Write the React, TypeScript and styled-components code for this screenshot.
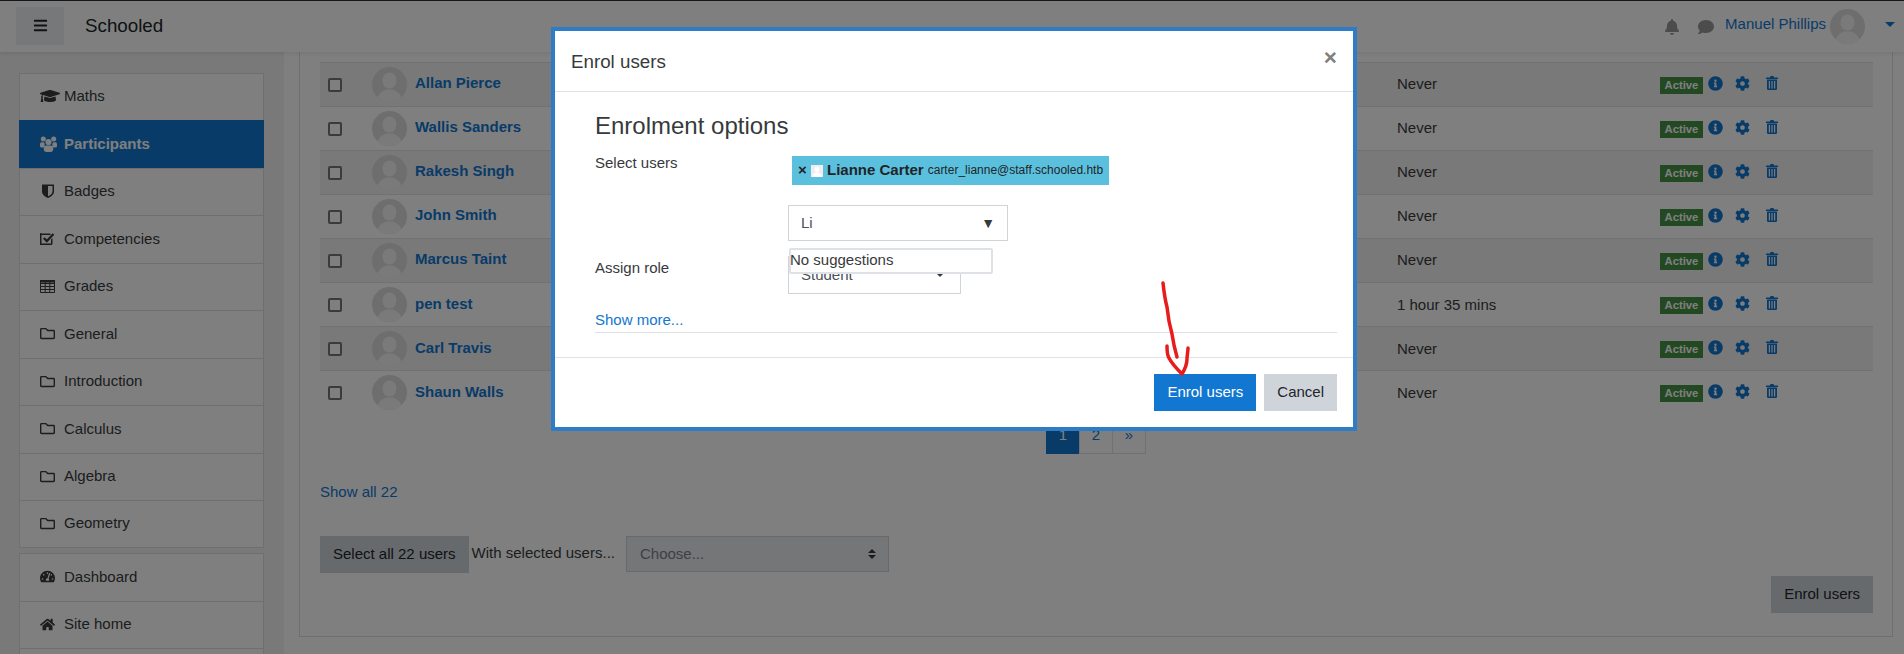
import React from 'react';
import styled, { createGlobalStyle } from 'styled-components';
import {
  FaBars,
  FaBell,
  FaCog,
  FaComment,
  FaGraduationCap,
  FaHome,
  FaInfoCircle,
  FaRegFolder,
  FaTachometerAlt,
} from 'react-icons/fa';

const GlobalStyle = createGlobalStyle`
  html, body {
    margin: 0;
    padding: 0;
    height: 654px;
    overflow: hidden;
    background: #fff;
    font-family: "Liberation Sans", Arial, sans-serif;
    font-size: 15px;
    line-height: 22.5px;
    color: #373a3c;
  }
  * { box-sizing: border-box; }
`;

const Page = styled.div`
  width: 1904px;
  height: 654px;
  overflow: hidden;
  display: flex;
  flex-direction: column;
  border-top: 1px solid #2a2d33;
`;

const Navbar = styled.header`
  height: 51px;
  flex: none;
  display: flex;
  align-items: center;
  padding-left: 16px;
  background: #fff;
  box-shadow: 0 2px 4px rgba(0, 0, 0, 0.08);
  position: relative;
  z-index: 1;
`;

const MenuButton = styled.div`
  width: 48px;
  height: 38px;
  margin-top: -2px;
  display: flex;
  align-items: center;
  justify-content: center;
  background: #edf0f3;
  color: #212529;
  font-size: 15px;
`;

const Brand = styled.div`
  margin-left: 21px;
  font-size: 18.75px;
  color: #212529;
`;

const NavRight = styled.div`
  margin-left: auto;
  display: flex;
  align-items: center;
  height: 100%;
`;

const NavIcon = styled.span<{ $w: number }>`
  width: ${(p) => p.$w}px;
  display: flex;
  color: #999;
  font-size: 16px;
`;

const UserName = styled.a`
  color: #1177d1;
  font-size: 15px;
  margin-right: 4px;
  margin-top: -4px;
`;

const UserAvatar = styled.svg`
  width: 35px;
  height: 35px;
  margin-top: -1px;
`;

const Caret = styled.span`
  margin: -5px 9px 0 20px;
  width: 0;
  height: 0;
  border-top: 5px solid #1177d1;
  border-left: 5px solid transparent;
  border-right: 5px solid transparent;
`;

const Body = styled.div`
  flex: 1;
  display: flex;
  min-height: 0;
`;

const Sidebar = styled.aside`
  width: 284px;
  flex: none;
  padding: 20.5px 20px 0 19px;
  background: #f2f2f2;
  overflow: hidden;
`;

const NavList = styled.ul`
  list-style: none;
  margin: 0 0 5.5px;
  padding: 0;
  background: #fff;
`;

const NavItem = styled.li<{ $active?: boolean }>`
  height: 47.5px;
  display: flex;
  align-items: center;
  padding-left: ${(p) => (p.$active ? '21px' : '20px')};
  padding-bottom: ${(p) => (p.$active ? '0' : '1px')};
  border: 1px solid rgba(0, 0, 0, 0.125);
  border-width: ${(p) => (p.$active ? '0' : '1px 1px 0')};
  background: ${(p) => (p.$active ? '#1177d1' : 'transparent')};
  color: ${(p) => (p.$active ? '#fff' : '#373a3c')};
  font-weight: ${(p) => (p.$active ? 700 : 400)};
  &:last-child {
    border-bottom-width: 1px;
  }
`;

const NavGlyph = styled.span`
  width: 24px;
  flex: none;
  display: flex;
  font-size: 15px;
`;

const GraduationGlyph = styled(NavGlyph)`
  font-size: 20px;
`;

const DrawnIcon = styled.svg<{ $w: number; $h: number }>`
  width: ${(p) => p.$w}px;
  height: ${(p) => p.$h}px;
  fill: currentColor;
  display: block;
`;

const Content = styled.main`
  flex: 1;
  padding: 0 11px 17px 15px;
  min-width: 0;
`;

const Card = styled.section`
  height: 585px;
  padding: 10px 19px 0 20px;
  border: 1px solid rgba(0, 0, 0, 0.125);
  border-top: none;
  background: #fff;
  display: flex;
  flex-direction: column;
`;

const Table = styled.div`
  flex: none;
`;

const Row = styled.div<{ $striped: boolean }>`
  height: 44.05px;
  display: grid;
  grid-template-columns: 44px 43px 982px 263px 1fr;
  align-items: center;
  padding-left: 8px;
  border-top: 1px solid #dee2e6;
  background: ${(p) => (p.$striped ? 'rgba(0, 0, 0, 0.05)' : 'transparent')};
`;

const Check = styled.span`
  width: 14px;
  height: 14px;
  border: 2px solid #767676;
  border-radius: 2px;
  background: #fff;
`;

const Avatar = styled.svg`
  width: 35px;
  height: 35px;
  display: block;
`;

const Name = styled.a`
  color: #1177d1;
  font-weight: 700;
  margin-top: -2px;
`;

const LastAccess = styled.span`
  color: #373a3c;
`;

const Actions = styled.div`
  display: flex;
  align-items: flex-start;
  color: #1177d1;
  margin-top: 1px;
`;

const Badge = styled.span`
  width: 43px;
  height: 17px;
  margin-top: 1px;
  background: #449244;
  color: #fff;
  font-size: 11.25px;
  font-weight: 700;
  line-height: 17px;
  text-align: center;
`;

const ActionIcon = styled.span<{ $w: number }>`
  width: ${(p) => p.$w}px;
  display: flex;
  font-size: 15px;
  justify-content: flex-end;
`;

const Pager = styled.div`
  display: flex;
  margin: 2px 0 0 726px;
  height: 38px;
`;

const PageLink = styled.span<{ $current?: boolean }>`
  width: 34px;
  height: 38px;
  display: flex;
  align-items: center;
  justify-content: center;
  background: ${(p) => (p.$current ? '#1177d1' : 'transparent')};
  color: ${(p) => (p.$current ? '#fff' : '#1177d1')};
  border: 1px solid ${(p) => (p.$current ? '#1177d1' : '#dee2e6')};
  & + & {
    margin-left: -1px;
  }
`;

const ShowAll = styled.a`
  display: block;
  margin-top: 27px;
  color: #1177d1;
`;

const BulkRow = styled.div`
  display: flex;
  margin-top: 32px;
`;

const GreyButton = styled.div`
  height: 37px;
  padding: 0 13px;
  display: flex;
  align-items: center;
  background: #ced4da;
  color: #212529;
`;

const BulkLabel = styled.span`
  margin: 6px 11px 0 3px;
  color: #373a3c;
`;

const BulkSelect = styled.div`
  width: 263px;
  height: 36px;
  padding: 0 13px;
  display: flex;
  align-items: center;
  justify-content: space-between;
  border: 1px solid #ced4da;
  background: #e9ecef;
  color: #7a828a;
`;

const Updown = styled.svg`
  width: 8px;
  height: 10px;
  margin-right: -1px;
`;

const BottomRow = styled.div`
  display: flex;
  justify-content: flex-end;
  margin-top: 3px;
`;

const Backdrop = styled.div`
  position: fixed;
  inset: 0;
  background: rgba(0, 0, 0, 0.5);
  z-index: 10;
`;

const Modal = styled.div`
  position: fixed;
  left: 551px;
  top: 27px;
  width: 806px;
  height: 404px;
  border: 4px solid #2e7cc6;
  background: #fff;
  z-index: 11;
  display: flex;
  flex-direction: column;
`;

const ModalHeader = styled.div`
  height: 61px;
  flex: none;
  display: flex;
  align-items: center;
  justify-content: space-between;
  padding: 0 16px 0 16px;
  border-bottom: 1px solid #dee2e6;
`;

const ModalTitle = styled.h5`
  margin: 3px 0 0;
  font-size: 18.75px;
  font-weight: 400;
  color: #373a3c;
`;

const CloseMark = styled.span`
  font-size: 22.5px;
  font-weight: 700;
  color: #808080;
  margin-top: -6px;
`;

const ModalBody = styled.div`
  flex: 1;
  padding: 20px 16px 0 40px;
  position: relative;
`;

const Heading = styled.h3`
  margin: 0 0 12px;
  font-size: 24px;
  line-height: 28px;
  font-weight: 400;
  color: #373a3c;
`;

const FormRow = styled.div`
  display: grid;
  grid-template-columns: 193px 1fr;
  & + & {
    margin-top: 15px;
  }
`;

const FormLabel = styled.label`
  color: #373a3c;
`;

const RoleLabel = styled(FormLabel)`
  padding-top: 1px;
`;

const Chip = styled.div`
  width: 317px;
  height: 29px;
  margin: 4px 0 0 4px;
  display: flex;
  align-items: center;
  padding-left: 6px;
  background: #5bc0de;
  color: #212529;
`;

const ChipClose = styled.span`
  font-size: 15px;
  font-weight: 700;
  width: 13px;
`;

const ChipAvatar = styled.svg`
  width: 12px;
  height: 12px;
  margin-right: 4px;
`;

const ChipName = styled.strong`
  font-size: 15px;
  margin-right: 4px;
`;

const ChipMail = styled.span`
  font-size: 12px;
`;

const SearchBox = styled.div`
  width: 220px;
  height: 36px;
  margin-top: 20px;
  padding: 0 12px;
  display: flex;
  align-items: center;
  justify-content: space-between;
  border: 1px solid #ced4da;
  color: #495057;
`;

const SearchArrow = styled.span`
  font-size: 14px;
  color: #373a3c;
`;

const RoleSelect = styled.div`
  width: 173px;
  height: 38px;
  padding: 0 12px;
  display: flex;
  align-items: center;
  justify-content: space-between;
  border: 1px solid #ced4da;
  color: #495057;
`;

const RoleCaret = styled.span`
  width: 0;
  height: 0;
  margin-right: 4px;
  border-top: 4px solid #373a3c;
  border-left: 4px solid transparent;
  border-right: 4px solid transparent;
`;

const Suggestions = styled.div`
  position: absolute;
  left: 234px;
  top: 156px;
  width: 204px;
  height: 26px;
  border: 2px solid #dee2e6;
  border-radius: 2px;
  background: #fff;
  color: #373a3c;
  line-height: 20px;
  text-indent: -1px;
`;

const ShowMore = styled.a`
  display: block;
  margin-top: 15px;
  border-bottom: 1px solid #dee2e6;
  color: #1177d1;
`;

const ModalFooter = styled.div`
  height: 70px;
  flex: none;
  display: flex;
  justify-content: flex-end;
  align-items: flex-start;
  gap: 8px;
  padding: 16px 16px 0 0;
  border-top: 1px solid #dee2e6;
`;

const FooterButton = styled.div<{ $primary?: boolean }>`
  height: 37px;
  padding: 0 13px;
  display: flex;
  align-items: center;
  background: ${(p) => (p.$primary ? '#1177d1' : '#ced4da')};
  color: ${(p) => (p.$primary ? '#fff' : '#212529')};
`;

const Arrow = styled.svg`
  position: fixed;
  left: 1155px;
  top: 275px;
  width: 45px;
  height: 105px;
  z-index: 12;
`;

const Silhouette = ({ as: Comp = Avatar }: { as?: typeof Avatar }) => (
  <Comp viewBox="0 0 35 35">
    <defs>
      <clipPath id="round">
        <circle cx="17.5" cy="17.5" r="17.5" />
      </clipPath>
    </defs>
    <g clipPath="url(#round)">
      <rect width="35" height="35" fill="#dcdcdc" />
      <ellipse cx="17.5" cy="13.5" rx="7" ry="8" fill="#f4f4f4" />
      <path d="M5 35c0-8 5-11 9-12.500h7c4 1.500 9 4.500 9 12.500z" fill="#f4f4f4" />
    </g>
  </Comp>
);

const SmallSilhouette = () => (
  <ChipAvatar viewBox="0 0 12 12">
    <rect width="12" height="12" fill="#eeeeee" />
    <ellipse cx="6" cy="4.500" rx="2.400" ry="2.800" fill="#ffffff" />
    <path d="M1.500 12c0-3 2-4 3.500-4.500h2c1.500.5 3.500 1.500 3.500 4.500z" fill="#ffffff" />
  </ChipAvatar>
);

const UsersIcon = () => (
  <DrawnIcon $w={17} $h={16} viewBox="0 0 17 16">
    <circle cx="3.300" cy="3" r="2.500" />
    <circle cx="13.700" cy="3" r="2.500" />
    <circle cx="8.500" cy="6" r="3.100" />
    <rect x="0" y="6.200" width="4.600" height="5.300" rx="1.600" />
    <rect x="12.400" y="6.200" width="4.600" height="5.300" rx="1.600" />
    <rect x="3.800" y="9.600" width="9.400" height="6.400" rx="2.400" />
  </DrawnIcon>
);

const ShieldIcon = () => (
  <DrawnIcon $w={12} $h={14} viewBox="0 0 12 14" style={{ marginLeft: 2 }}>
    <path
      fillRule="evenodd"
      d="M0 .5h12v7c0 3.200-3 5.200-6 6.500-3-1.300-6-3.300-6-6.500zM6 2v10.300c2-1 4.500-2.400 4.500-4.800V2z"
    />
  </DrawnIcon>
);

const CheckSquareIcon = () => (
  <DrawnIcon $w={15} $h={14} viewBox="0 0 15 14">
    <path d="M1.500 1.500h9v1.500h-9v8.500h9.500v-4l1.500-1.500v5.500a1.500 1.500 0 0 1-1.500 1.500h-10a1.500 1.500 0 0 1-1.500-1.500v-9a1.500 1.500 0 0 1 1.500-1.500z" />
    <path d="M3.800 6l3 3 6.700-7" fill="none" stroke="currentColor" strokeWidth="2.300" />
  </DrawnIcon>
);

const TableIcon = () => (
  <DrawnIcon $w={15} $h={13} viewBox="0 0 15 13">
    <path
      fill="none"
      stroke="currentColor"
      d="M.5.5h14v12H.5zM.5 3.500h14M.5 6.500h14M.5 9.500h14M5.200.5v12M9.800.5v12"
    />
    <rect width="15" height="2.500" />
  </DrawnIcon>
);

const TrashIcon = () => (
  <DrawnIcon $w={12} $h={14} viewBox="0 0 12 14">
    <path
      fillRule="evenodd"
      d="M3.800 1.500L4.600 0h2.800l.8 1.500H12V3H0V1.500zM1 3.600h10v9.200a1.200 1.200 0 0 1-1.200 1.200H2.200A1.200 1.200 0 0 1 1 12.800zM2.800 5v7.600h1.200V5zM5.400 5v7.600h1.200V5zM8 5v7.600h1.200V5z"
    />
  </DrawnIcon>
);

const people: [string, string][] = [
  ['Allan Pierce', 'Never'],
  ['Wallis Sanders', 'Never'],
  ['Rakesh Singh', 'Never'],
  ['John Smith', 'Never'],
  ['Marcus Taint', 'Never'],
  ['pen test', '1 hour 35 mins'],
  ['Carl Travis', 'Never'],
  ['Shaun Walls', 'Never'],
];

const courseItems: [React.ReactNode, string, boolean?][] = [
  [<UsersIcon />, 'Participants', true],
  [<ShieldIcon />, 'Badges'],
  [<CheckSquareIcon />, 'Competencies'],
  [<TableIcon />, 'Grades'],
  [<FaRegFolder />, 'General'],
  [<FaRegFolder />, 'Introduction'],
  [<FaRegFolder />, 'Calculus'],
  [<FaRegFolder />, 'Algebra'],
  [<FaRegFolder />, 'Geometry'],
];

export default function App() {
  return (
    <>
      <GlobalStyle />
      <Page>
        <Navbar>
          <MenuButton>
            <FaBars />
          </MenuButton>
          <Brand>Schooled</Brand>
          <NavRight>
            <NavIcon $w={34}>
              <FaBell />
            </NavIcon>
            <NavIcon $w={27}>
              <FaComment />
            </NavIcon>
            <UserName>Manuel Phillips</UserName>
            <Silhouette as={UserAvatar} />
            <Caret />
          </NavRight>
        </Navbar>
        <Body>
          <Sidebar>
            <NavList>
              <NavItem>
                <GraduationGlyph>
                  <FaGraduationCap />
                </GraduationGlyph>
                Maths
              </NavItem>
              {courseItems.map(([icon, label, active]) => (
                <NavItem key={label} $active={active}>
                  <NavGlyph>{icon}</NavGlyph>
                  {label}
                </NavItem>
              ))}
            </NavList>
            <NavList>
              <NavItem>
                <NavGlyph>
                  <FaTachometerAlt />
                </NavGlyph>
                Dashboard
              </NavItem>
              <NavItem>
                <NavGlyph>
                  <FaHome />
                </NavGlyph>
                Site home
              </NavItem>
              <NavItem />
            </NavList>
          </Sidebar>
          <Content>
            <Card>
              <Table>
                {people.map(([name, access], i) => (
                  <Row key={name} $striped={i % 2 === 0}>
                    <Check />
                    <Silhouette />
                    <Name>{name}</Name>
                    <LastAccess>{access}</LastAccess>
                    <Actions>
                      <Badge>Active</Badge>
                      <ActionIcon $w={20}>
                        <FaInfoCircle />
                      </ActionIcon>
                      <ActionIcon $w={27}>
                        <FaCog />
                      </ActionIcon>
                      <ActionIcon $w={28}>
                        <TrashIcon />
                      </ActionIcon>
                    </Actions>
                  </Row>
                ))}
              </Table>
              <Pager>
                <PageLink $current>1</PageLink>
                <PageLink>2</PageLink>
                <PageLink>»</PageLink>
              </Pager>
              <ShowAll>Show all 22</ShowAll>
              <BulkRow>
                <GreyButton>Select all 22 users</GreyButton>
                <BulkLabel>With selected users...</BulkLabel>
                <BulkSelect>
                  Choose...
                  <Updown viewBox="0 0 8 10">
                    <path d="M4 0l4 4H0zM4 10L0 6h8z" fill="#373a3c" />
                  </Updown>
                </BulkSelect>
              </BulkRow>
              <BottomRow>
                <GreyButton>Enrol users</GreyButton>
              </BottomRow>
            </Card>
          </Content>
        </Body>
      </Page>
      <Backdrop />
      <Modal>
        <ModalHeader>
          <ModalTitle>Enrol users</ModalTitle>
          <CloseMark>×</CloseMark>
        </ModalHeader>
        <ModalBody>
          <Heading>Enrolment options</Heading>
          <FormRow>
            <FormLabel>Select users</FormLabel>
            <div>
              <Chip>
                <ChipClose>×</ChipClose>
                <SmallSilhouette />
                <ChipName>Lianne Carter</ChipName>
                <ChipMail>carter_lianne@staff.schooled.htb</ChipMail>
              </Chip>
              <SearchBox>
                Li
                <SearchArrow>▼</SearchArrow>
              </SearchBox>
            </div>
          </FormRow>
          <FormRow>
            <RoleLabel>Assign role</RoleLabel>
            <RoleSelect>
              Student
              <RoleCaret />
            </RoleSelect>
          </FormRow>
          <Suggestions>No suggestions</Suggestions>
          <ShowMore>Show more...</ShowMore>
        </ModalBody>
        <ModalFooter>
          <FooterButton $primary>Enrol users</FooterButton>
          <FooterButton>Cancel</FooterButton>
        </ModalFooter>
      </Modal>
      <Arrow viewBox="0 0 45 105">
        <path
          d="M8 8c1 9 2 17 4 24 1 10 3 20 5 27 1 7 3 16 5 23M12 71c0 6 0 9 2 12 3 6 8 11 13 16 3-5 5-9 5-15 0-3 1-8 1-11"
          fill="none"
          stroke="#e81c1c"
          strokeWidth="3.5"
          strokeLinecap="round"
          strokeLinejoin="round"
        />
      </Arrow>
    </>
  );
}
